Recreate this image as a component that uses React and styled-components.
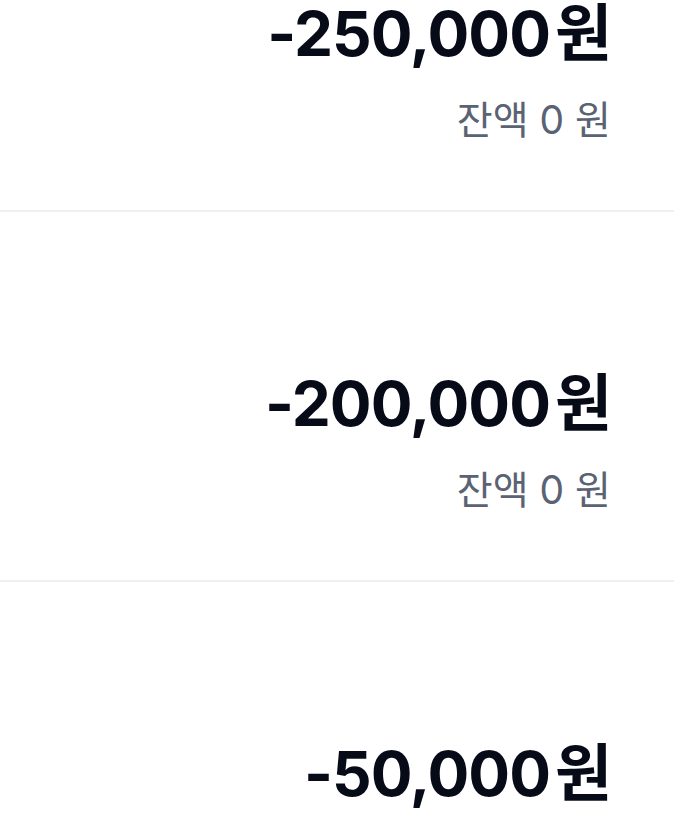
import styled, { createGlobalStyle } from "styled-components";

const GlobalStyle = createGlobalStyle`
  body {
    margin: 0;
    background-color: #ffffff;
    font-family: Inter, "Noto Sans CJK KR", sans-serif;
    overflow: hidden;
  }
`;

const Screen = styled.div`
  width: 674px;
  height: 823px;
  overflow: hidden;
  background-color: #ffffff;
`;

const List = styled.ul`
  list-style: none;
  margin: -158px 0 0 0;
  padding: 0;
`;

const Item = styled.li`
  display: flex;
  flex-direction: column;
  align-items: flex-end;
  gap: 31px;

  padding: 159px 63px 68px 0;
  border-bottom: 2px solid #eff0f4;
`;

const Amount = styled.div`
  font-size: 62px;
  line-height: 66px;
  font-weight: 700;
  color: #070a17;
  letter-spacing: -1px;
`;

const Unit = styled.span`
  margin-left: 5px;
`;

const Balance = styled.div`
  font-size: 39px;
  line-height: 44px;
  font-weight: 400;
  color: #5a6273;
`;

const history = [
  { amount: "-250,000", balance: 0 },
  { amount: "-200,000", balance: 0 },
  { amount: "-50,000", balance: 0 },
];

const App = () => {
  return (
    <>
      <GlobalStyle />
      <Screen>
        <List>
          {history.map((h, i) => (
            <Item key={i}>
              <Amount>
                {h.amount}
                <Unit>원</Unit>
              </Amount>
              <Balance>잔액 {h.balance} 원</Balance>
            </Item>
          ))}
        </List>
      </Screen>
    </>
  );
};

export default App;
